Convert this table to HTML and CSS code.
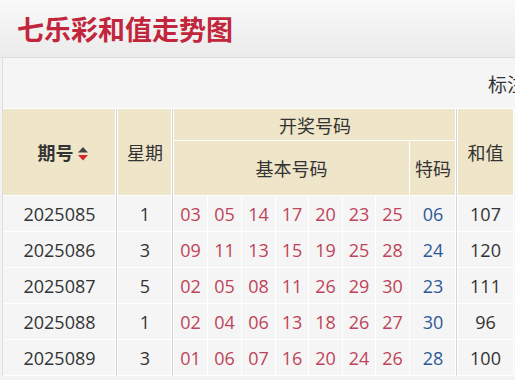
FILE: index.html
```html
<!DOCTYPE html>
<html lang="zh-CN">
<head>
<meta charset="utf-8">
<title>七乐彩和值走势图</title>
<link rel="stylesheet" href="styles.css">
</head>
<body>
<header class="topbar">
  <h1 class="title">七乐彩和值走势图</h1>
</header>
<div class="main">
  <div class="toolbar">
    <span class="tool">标注</span>
  </div>
  <table class="chart">
    <thead>
      <tr class="hrow1">
        <th rowspan="2" class="c-issue sep issue-head">期号<svg class="sort" width="10" height="14" viewBox="0 0 10 14"><polygon points="5,0 10,5.5 0,5.5" fill="#444"/><polygon points="0,8 10,8 5,13.5" fill="#d8232a"/></svg></th>
        <th rowspan="2" class="c-week sep after">星期</th>
        <th colspan="8" class="sep after">开奖号码</th>
        <th rowspan="2" class="c-sum after">和值</th>
      </tr>
      <tr class="hrow2">
        <th colspan="7" class="after">基本号码</th>
        <th class="sep">特码</th>
      </tr>
    </thead>
    <tbody>
      <tr>
        <td class="c-issue sep">2025085</td><td class="c-week sep after">1</td>
        <td class="n n1 after red">03</td><td class="n n2 red">05</td><td class="n n3 red">14</td><td class="n n4 red">17</td><td class="n n5 red">20</td><td class="n n6 red">23</td><td class="n n7 red">25</td>
        <td class="c-sp sep blue">06</td><td class="c-sum after">107</td>
      </tr>
      <tr>
        <td class="c-issue sep">2025086</td><td class="c-week sep after">3</td>
        <td class="n n1 after red">09</td><td class="n n2 red">11</td><td class="n n3 red">13</td><td class="n n4 red">15</td><td class="n n5 red">19</td><td class="n n6 red">25</td><td class="n n7 red">28</td>
        <td class="c-sp sep blue">24</td><td class="c-sum after">120</td>
      </tr>
      <tr>
        <td class="c-issue sep">2025087</td><td class="c-week sep after">5</td>
        <td class="n n1 after red">02</td><td class="n n2 red">05</td><td class="n n3 red">08</td><td class="n n4 red">11</td><td class="n n5 red">26</td><td class="n n6 red">29</td><td class="n n7 red">30</td>
        <td class="c-sp sep blue">23</td><td class="c-sum after">111</td>
      </tr>
      <tr>
        <td class="c-issue sep">2025088</td><td class="c-week sep after">1</td>
        <td class="n n1 after red">02</td><td class="n n2 red">04</td><td class="n n3 red">06</td><td class="n n4 red">13</td><td class="n n5 red">18</td><td class="n n6 red">26</td><td class="n n7 red">27</td>
        <td class="c-sp sep blue">30</td><td class="c-sum after">96</td>
      </tr>
      <tr>
        <td class="c-issue sep">2025089</td><td class="c-week sep after">3</td>
        <td class="n n1 after red">01</td><td class="n n2 red">06</td><td class="n n3 red">07</td><td class="n n4 red">16</td><td class="n n5 red">20</td><td class="n n6 red">24</td><td class="n n7 red">26</td>
        <td class="c-sp sep blue">28</td><td class="c-sum after">100</td>
      </tr>
    </tbody>
  </table>
</div>
</body>
</html>
```
FILE: styles.css
```css
html, body {
  margin: 0;
  padding: 0;
  overflow: hidden;
}
body {
  background: #f3f3f3;
  font-family: "Open Sans", "Noto Sans CJK SC", sans-serif;
  color: #333;
}
.topbar {
  height: 57px;
  border-bottom: 1px solid #dcdcdc;
  background: linear-gradient(#f9f9f9, #ebebeb);
  display: flex;
  align-items: center;
  padding-left: 17px;
}
.title {
  margin: 0;
  font-family: "Noto Sans CJK SC", sans-serif;
  font-size: 27px;
  font-weight: 700;
  color: #c2263c;
  line-height: 1;
}
.main {
  margin-left: 2px;
  border-left: 1px solid #dedede;
  background: #f5f5f5;
}
.toolbar {
  height: 50px;
  display: flex;
  align-items: center;
  padding-left: 485px;
  white-space: nowrap;
  font-family: "Noto Sans CJK SC", sans-serif;
  font-size: 19px;
  color: #333;
}
.tool { flex: none; }
.chart {
  border-collapse: separate;
  border-spacing: 0;
  table-layout: fixed;
  border-top: 1px solid #fff;
  font-size: 18px;
}
.chart th, .chart td {
  padding: 0;
  text-align: center;
  vertical-align: middle;
  border-right: 1px solid #fff;
  border-bottom: 1px solid #fff;
  box-sizing: border-box;
  white-space: nowrap;
}
.chart th {
  background: #efe5c9;
  font-weight: 400;
  font-family: "Noto Sans CJK SC", sans-serif;
  color: #333;
}
.chart td {
  background: #f5f5f5;
  line-height: 1;
}
.hrow1 { height: 32px; }
.hrow2 { height: 55px; }
tbody tr { height: 36px; }
.chart .sep {
  border-right: 1px solid #d4d4d4;
  box-shadow: inset -1px 0 0 #fff;
}
.chart .after { border-left: 1px solid #fff; }
.c-issue { width: 114px; }
.c-week { width: 56px; }
.n1 { width: 35px; }
.n2, .n3, .n5, .n7 { width: 34px; }
.n4, .n6 { width: 33px; }
.c-sp { width: 47px; }
.c-sum { width: 57px; }
.chart .issue-head {
  font-weight: 700;
  padding-left: 6px;
}
.sort {
  vertical-align: -1px;
  margin-left: 4px;
}
.red { color: #bf4459; }
.blue { color: #2d5a97; }
```
